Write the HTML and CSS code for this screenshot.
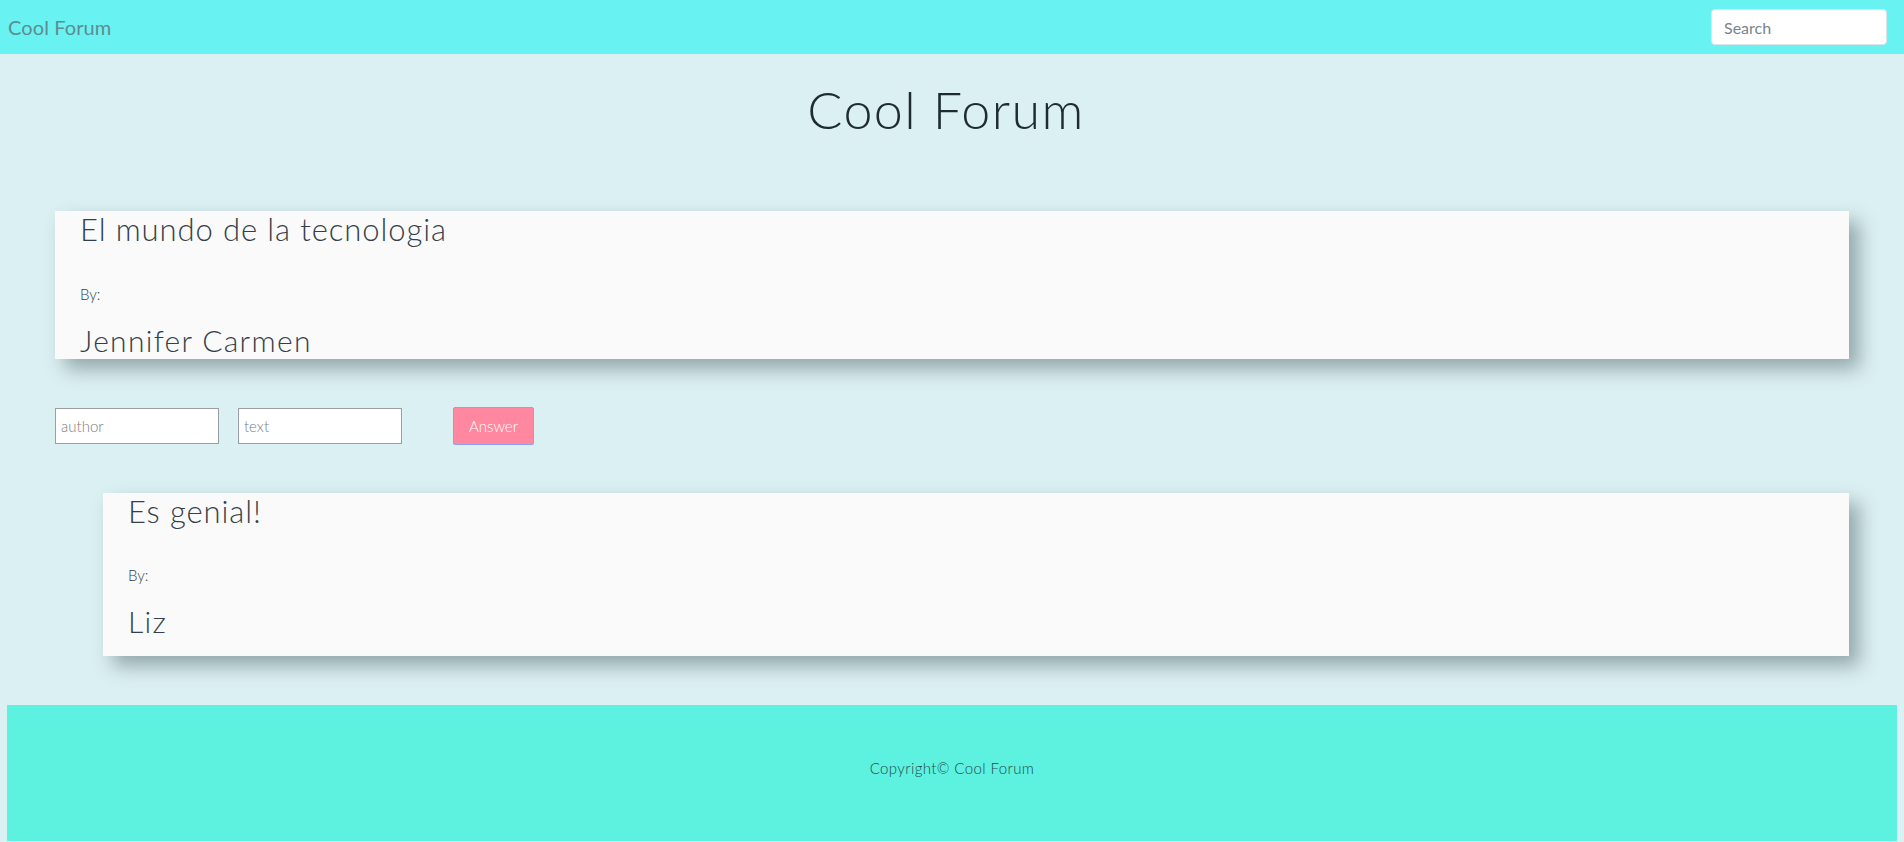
FILE: index.html
```html
<!DOCTYPE html>
<html lang="es">
<head>
<meta charset="utf-8">
<title>Cool Forum</title>
<link rel="stylesheet" href="styles.css">
</head>
<body>
<nav class="navbar">
  <a class="brand" href="#">Cool Forum</a>
  <input class="search" type="text" placeholder="Search">
</nav>
<main class="main">
  <h1 class="page-title">Cool Forum</h1>
  <article class="card card-topic">
    <h2 class="card-title">El mundo de la tecnologia</h2>
    <p class="card-by">By:</p>
    <h3 class="card-author">Jennifer Carmen</h3>
  </article>
  <form class="answer-form">
    <input class="field" type="text" placeholder="author">
    <input class="field" type="text" placeholder="text">
    <button class="answer-btn" type="button">Answer</button>
  </form>
  <article class="card card-reply">
    <h2 class="card-title">Es genial!</h2>
    <p class="card-by">By:</p>
    <h3 class="card-author">Liz</h3>
  </article>
</main>
<footer class="footer">
  <p class="copyright">Copyright© Cool Forum</p>
</footer>
</body>
</html>
```
FILE: styles.css
```css
* { box-sizing: border-box; }
html, body {
  margin: 0;
  padding: 0;
  background: #dbf0f2;
  font-family: "Lato Light", Lato, "Liberation Sans", sans-serif;
  font-weight: 300;
  color: #1f2b33;
}
.navbar {
  height: 54px;
  background: #69f2f2;
  display: flex;
  align-items: center;
  justify-content: space-between;
  padding: 0 17px 0 8px;
}
.brand {
  font-family: Lato, "Liberation Sans", sans-serif;
  font-size: 20px;
  font-weight: 400;
  letter-spacing: 0.1px;
  color: #5e8c90;
  text-decoration: none;
  padding-bottom: 1px;
}
.search {
  width: 176px;
  height: 36px;
  border: 1px solid #dde4e8;
  border-radius: 4px;
  background: #fff;
  font-family: Lato, "Liberation Sans", sans-serif;
  font-weight: 400;
  font-size: 16px;
  padding: 0 12px;
}
.search::placeholder { color: #7a838b; font-weight: 400; }
.main {
  padding: 0 55px 49px 55px;
}
.page-title {
  margin: 24px 0 71px 0;
  padding-right: 12px;
  text-align: center;
  font-size: 52px;
  font-weight: 300;
  letter-spacing: 1.4px;
  line-height: 1.2;
  color: #1f2b33;
}
.card {
  background: #fafafa;
  box-shadow: 10px 10px 18px rgba(60, 80, 85, 0.45);
  padding: 0 25px;
  color: #343f4a;
}
.card-topic { padding-bottom: 1px; }
.card-reply { margin-left: 48px; padding-bottom: 17px; }
.card-title {
  margin: 0;
  font-size: 31px;
  font-weight: 300;
  letter-spacing: 0.9px;
  line-height: 1.2;
}
.card-by {
  margin: 36px 0 0 0;
  font-size: 15px;
  font-weight: 300;
  line-height: 1.2;
}
.card-author {
  margin: 19px 0 0 0;
  font-size: 30px;
  font-weight: 300;
  letter-spacing: 1.3px;
  line-height: 1.2;
}
.answer-form {
  display: flex;
  align-items: center;
  margin: 48px 0 48px 0;
  height: 38px;
}
.field {
  width: 164px;
  height: 36px;
  border: 1px solid #9a9fa3;
  background: #fff;
  padding: 0 5px;
  font-family: "Lato Light", Lato, "Liberation Sans", sans-serif;
  font-size: 15px;
  font-weight: 300;
  margin-right: 19px;
  border-radius: 0;
}
.field::placeholder { color: #7d7d7d; }
.answer-btn {
  margin-left: 32px;
  width: 81px;
  height: 38px;
  background: #ff87a0;
  border: 1px solid #8fa0f0;
  border-radius: 2px;
  color: #fff;
  font-family: "Lato Light", Lato, "Liberation Sans", sans-serif;
  font-size: 15px;
  font-weight: 300;
}
.footer {
  margin: 0 7px;
  height: 136px;
  background: #5df2df;
  padding-top: 54px;
}
.copyright {
  margin: 0;
  text-align: center;
  font-size: 15px;
  font-weight: 300;
  letter-spacing: 0.4px;
  line-height: 1.2;
  color: #1f4a4c;
}
```
